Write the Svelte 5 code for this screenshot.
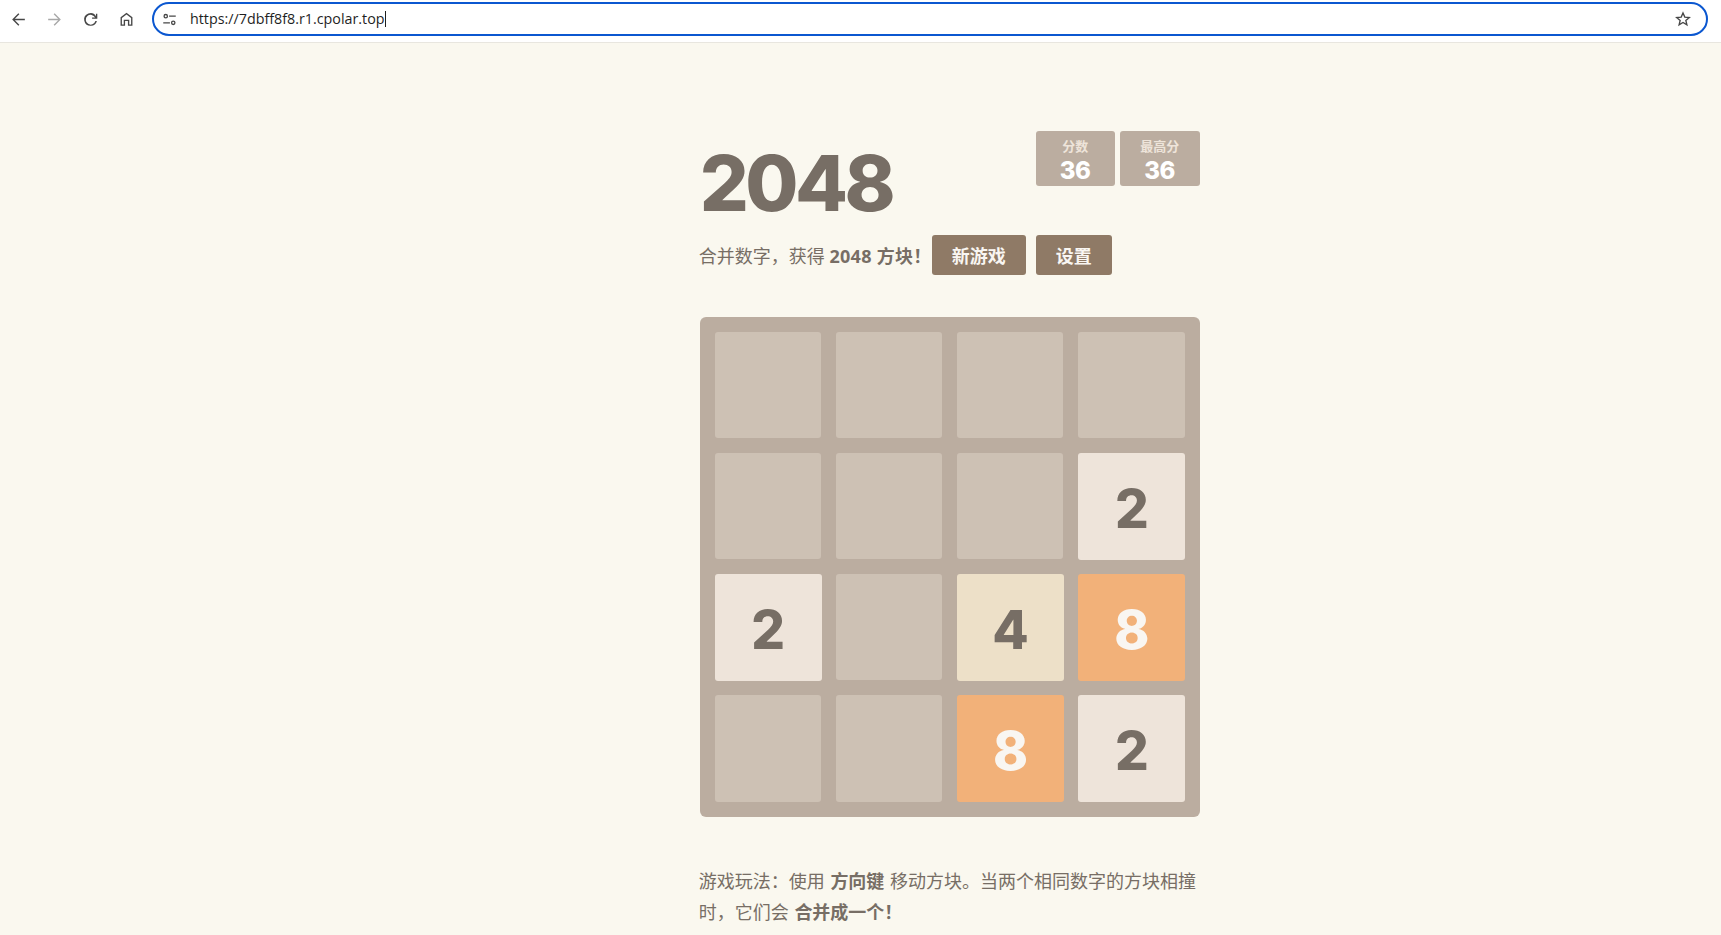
<script>
  const tiles = [
    0, 0, 0, 0,
    0, 0, 0, 2,
    2, 0, 4, 8,
    0, 0, 8, 2
  ];
</script>

<div class="browser-bar">
  <div class="nav-icons">
    <svg class="icon" viewBox="0 0 24 24"><path d="M20 11.1H7.4l5.7-5.7L11.8 4 4 12l7.8 8 1.3-1.4-5.700-5.700H20z" /></svg>
    <svg class="icon faded" viewBox="0 0 24 24"><path d="M4 11.1h12.600l-5.700-5.700L12.200 4 20 12l-7.800 8-1.300-1.400 5.700-5.700H4z" /></svg>
    <svg class="icon" viewBox="0 0 24 24"><path d="M12 20a8 8 0 1 1 6.900-12V4.600h1.700v6.600H14V9.500h3.800A6.200 6.200 0 1 0 18.200 14h1.900A8 8 0 0 1 12 20z" /></svg>
    <svg class="icon" viewBox="0 0 24 24"><path d="M12 3.500 4.500 9.200V20h5.700v-6h3.600v6h5.700V9.200zm5.800 14.800h-2.300v-6h-7v6H6.200V10l5.800-4.400 5.800 4.400z" /></svg>
  </div>
  <div class="address">
    <svg class="tune" viewBox="0 0 18 18">
      <circle cx="4.500" cy="5" r="2" />
      <path d="M8.500 5h8M1.500 13h8" />
      <circle cx="13.500" cy="13" r="2" />
    </svg>
    <span class="url">https://7dbff8f8.r1.cpolar.top</span><span class="caret"></span>
    <svg class="star" viewBox="0 0 24 24"><path d="m12 4 2.400 5.500 6 .5-4.600 3.900 1.400 5.900L12 16.700l-5.200 3.100 1.400-5.900L3.600 10l6-.5z" /></svg>
  </div>
</div>

<main class="container">
  <div class="heading">
    <h1>2048</h1>
    <div class="scores">
      <div class="score-box"><span class="score-label">分数</span><span class="score-value">36</span></div>
      <div class="score-box best"><span class="score-label">最高分</span><span class="score-value">36</span></div>
    </div>
  </div>

  <div class="intro">
    <p>合并数字，获得 <strong>2048 方块！</strong></p>
    <button class="new-game">新游戏</button>
    <button class="settings">设置</button>
  </div>

  <div class="board">
    {#each tiles as value}
      <div class="cell tile-{value}">{value || ''}</div>
    {/each}
  </div>

  <p class="explain">游戏玩法：使用 <strong>方向键</strong> 移动方块。当两个相同数字的方块相撞时，它们会 <strong>合并成一个！</strong></p>
</main>

<style>
  :global(body) {
    background: #faf8ef;
    color: #776e65;
    font-family: "Open Sans", "Noto Sans CJK SC", sans-serif;
    height: 935px;
    overflow: hidden;
  }

  .browser-bar {
    display: flex;
    align-items: center;
    height: 42px;
    background: #fff;
    border-bottom: 1px solid #e8e6df;
    padding-left: 9px;
    padding-right: 13px;
  }

  .nav-icons {
    display: flex;
    gap: 17px;
    margin-right: 16px;
    margin-top: -4px;
  }

  .icon {
    width: 19px;
    height: 19px;
    fill: #474747;
  }

  .faded {
    fill: #a8a8a8;
  }

  .address {
    flex: 1;
    display: flex;
    align-items: center;
    height: 34px;
    box-sizing: border-box;
    border: 2px solid #0b57d0;
    border-radius: 17px;
    padding: 0 14px 0 8px;
    margin-top: -4px;
  }

  .tune {
    width: 15px;
    height: 15px;
    fill: none;
    stroke: #474747;
    stroke-width: 1.600;
    margin-right: 13px;
  }

  .url {
    font-family: "Open Sans", sans-serif;
    font-size: 14.300px;
    line-height: 16px;
    color: #1f1f1f;
    margin-top: -1px;
  }

  .caret {
    width: 1px;
    height: 16px;
    background: #1f1f1f;
  }

  .star {
    width: 18px;
    height: 18px;
    margin-left: auto;
    fill: none;
    stroke: #474747;
    stroke-width: 1.800;
  }

  .container {
    width: 500px;
    margin-left: 699.700px;
    padding-top: 88px;
  }

  .heading {
    display: flex;
    justify-content: space-between;
    align-items: flex-start;
    height: 104px;
  }

  h1 {
    margin: 0;
    font-family: Inter, sans-serif;
    font-size: 77px;
    font-weight: 800;
    letter-spacing: -3.500px;
    line-height: 104px;
  }

  .scores {
    display: flex;
    gap: 5px;
  }

  .score-box {
    display: flex;
    flex-direction: column;
    align-items: center;
    width: 79px;
    height: 55px;
    background: #bbada0;
    border-radius: 3px;
    color: #fff;
    font-weight: 700;
  }

  .best {
    width: 80px;
  }

  .score-label {
    font-size: 13px;
    color: #eee4da;
    line-height: 18px;
    margin-top: 6px;
  }

  .score-value {
    font-family: Inter, sans-serif;
    font-size: 24px;
    font-weight: 800;
    letter-spacing: -.5px;
    line-height: 31px;
  }

  .intro {
    display: flex;
    align-items: center;
    height: 40px;
  }

  .intro p {
    margin: 0 0 0 -1px;
    font-size: 18px;
    white-space: nowrap;
    width: 233px;
  }

  .intro strong {
    letter-spacing: .3px;
  }

  button {
    height: 40px;
    border: 0;
    border-radius: 3px;
    background: #8f7a66;
    color: #f9f6f2;
    font: 700 18px "Open Sans", "Noto Sans CJK SC", sans-serif;
    padding: 0;
  }

  .new-game {
    width: 94px;
    margin-right: 10px;
  }

  .settings {
    width: 76px;
  }

  .board {
    display: grid;
    grid-template-columns: repeat(4, 1fr);
    grid-auto-rows: 106.250px;
    gap: 15px;
    width: 500px;
    height: 500px;
    box-sizing: border-box;
    padding: 15px;
    margin-top: 41.700px;
    background: #bbada0;
    border-radius: 6px;
  }

  .cell {
    display: flex;
    align-items: center;
    justify-content: center;
    box-sizing: border-box;
    padding-top: 5px;
    background: #cdc1b4;
    border-radius: 3px;
    font-family: Inter, sans-serif;
    font-size: 53px;
    font-weight: 800;
  }

  /* numbered tiles sit a bit larger than the empty cells */
  .tile-2,
  .tile-4,
  .tile-8 {
    margin-right: -.6px;
    margin-bottom: -.6px;
  }

  .tile-2 {
    background: #eee4da;
  }

  .tile-4 {
    background: #ede0c8;
  }

  .tile-8 {
    background: #f2b179;
    color: #f9f6f2;
  }

  .explain {
    margin: 49.300px 0 0 -1px;
    font-size: 18px;
    line-height: 31px;
    word-spacing: 1px;
  }
</style>
